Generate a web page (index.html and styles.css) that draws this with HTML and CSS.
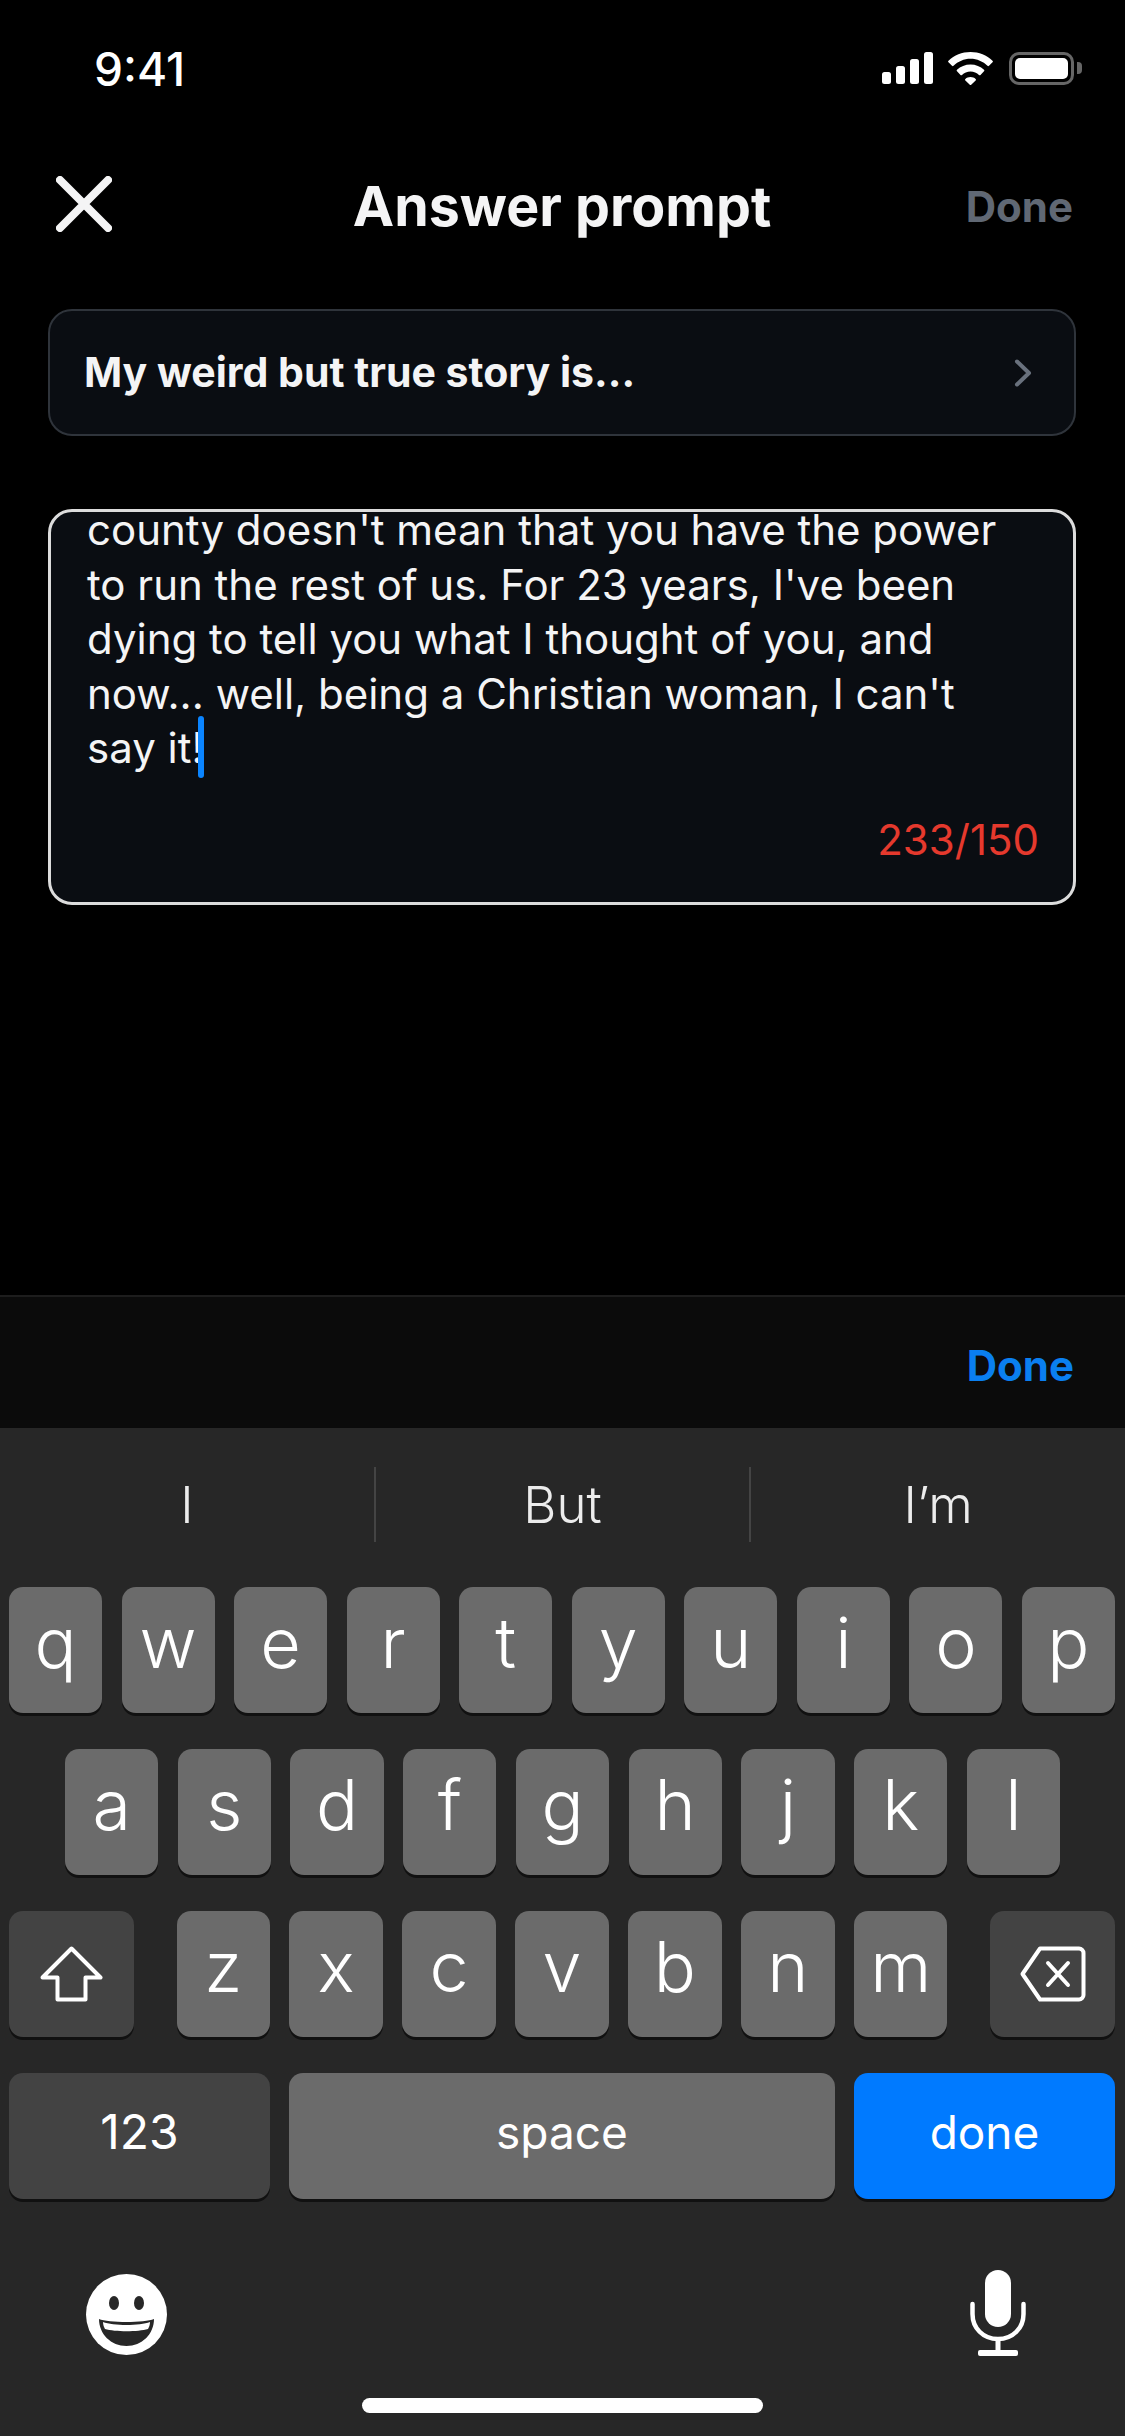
FILE: index.html
```html
<!DOCTYPE html>
<html lang="en">
<head>
<meta charset="utf-8">
<title>Answer prompt</title>
<link rel="stylesheet" href="styles.css">
</head>
<body>
<div class="screen">
  <main class="app">
    <div class="status">
      <span class="time">9:41</span>
      <div class="status-icons">
        <svg class="signal" width="51" height="32" viewBox="0 0 51 32"><rect x="0" y="20" width="9" height="12" rx="2.5"/><rect x="14" y="14" width="9" height="18" rx="2.5"/><rect x="28" y="7" width="9" height="25" rx="2.5"/><rect x="42" y="0" width="9" height="32" rx="2.5"/></svg>
        <svg class="wifi" width="45" height="33" viewBox="0 0 45 33"><path d="M22.5 0C31 0 38.800 3.300 44.500 8.700a1 1 0 0 1 0 1.500L41 13.800a1 1 0 0 1-1.500 0C35 9.500 29 6.800 22.500 6.800S10 9.500 5.500 13.800a1 1 0 0 1-1.500 0L.5 10.200a1 1 0 0 1 0-1.500C6.200 3.300 14 0 22.500 0Z"/><path d="M22.500 12.500c5.200 0 10 2 13.500 5.300a1 1 0 0 1 0 1.500l-3.500 3.600a1 1 0 0 1-1.500 0c-2.200-2-5.200-3.300-8.500-3.300S16.200 20.900 14 22.900a1 1 0 0 1-1.500 0L9 19.300a1 1 0 0 1 0-1.500c3.500-3.300 8.300-5.300 13.500-5.300Z"/><path d="M22.500 25c2 0 3.800.7 5.100 1.900a1 1 0 0 1 0 1.500l-4.400 4.300a1 1 0 0 1-1.400 0l-4.400-4.300a1 1 0 0 1 0-1.500C18.700 25.700 20.500 25 22.500 25Z"/></svg>
        <div class="battery"><div class="battery-body"><div class="battery-fill"></div></div><div class="battery-nub"></div></div>
      </div>
    </div>

    <header class="nav">
      <svg class="close" width="56" height="56" viewBox="0 0 56 56"><path d="M4 4 52 52M52 4 4 52" stroke="#f4f4f5" stroke-width="8" stroke-linecap="round" fill="none"/></svg>
      <h1 class="nav-title">Answer prompt</h1>
      <span class="nav-done">Done</span>
    </header>

    <div class="prompt-card">
      <span class="prompt-text">My weird but true story is...</span>
      <svg class="chevron" width="18" height="28" viewBox="0 0 18 28"><path d="M3 2.500 15 14 3 25.500" stroke="#69717d" stroke-width="4" stroke-linecap="round" stroke-linejoin="round" fill="none"/></svg>
    </div>

    <section class="answer">
      <p class="answer-text">county doesn't mean that you have the power<br>to run the rest of us. For 23 years, I've been<br>dying to tell you what I thought of you, and<br>now... well, being a Christian woman, I can't<br>say it!<span class="caret"></span></p>
      <div class="counter">233/150</div>
    </section>
  </main>

  <div class="toolbar"><span class="toolbar-done">Done</span></div>

  <div class="keyboard">
    <div class="suggestions">
      <span class="suggestion">I</span>
      <span class="suggestion">But</span>
      <span class="suggestion">I’m</span>
    </div>
    <div class="row row-1">
      <span class="key">q</span><span class="key">w</span><span class="key">e</span><span class="key">r</span><span class="key">t</span><span class="key">y</span><span class="key">u</span><span class="key">i</span><span class="key">o</span><span class="key">p</span>
    </div>
    <div class="row row-2">
      <span class="key">a</span><span class="key">s</span><span class="key">d</span><span class="key">f</span><span class="key">g</span><span class="key">h</span><span class="key">j</span><span class="key">k</span><span class="key">l</span>
    </div>
    <div class="row row-3">
      <span class="key key-fn key-side">
        <svg width="63" height="56" viewBox="0 0 63 56"><path d="M31.500 2.500 60.500 31.500H45.500V53.500H17.500V31.500H2.500Z" fill="none" stroke="#fff" stroke-width="4" stroke-linejoin="round"/></svg>
      </span>
      <div class="row-3-letters">
        <span class="key">z</span><span class="key">x</span><span class="key">c</span><span class="key">v</span><span class="key">b</span><span class="key">n</span><span class="key">m</span>
      </div>
      <span class="key key-fn key-side">
        <svg width="66" height="56" viewBox="0 0 66 56"><path d="M20 2.500H59a4.500 4.500 0 0 1 4.500 4.500V49a4.500 4.500 0 0 1-4.500 4.500H20L2.500 28Z" fill="none" stroke="#fff" stroke-width="4" stroke-linejoin="round"/><path d="M28 17 48 39M48 17 28 39" stroke="#fff" stroke-width="4" stroke-linecap="round" fill="none"/></svg>
      </span>
    </div>
    <div class="row row-4">
      <span class="key key-fn key-small key-num">123</span>
      <span class="key key-small key-space">space</span>
      <span class="key key-small key-go">done</span>
    </div>
    <div class="kb-bottom">
      <svg width="81" height="81" viewBox="0 0 81 81"><circle cx="40.500" cy="40.500" r="40.500" fill="#fff"/><ellipse cx="28" cy="29" rx="5" ry="7" fill="#272727"/><ellipse cx="53" cy="29" rx="5" ry="7" fill="#272727"/><path d="M13 45C22 49 59 49 68 45 68 60 56 72 40.500 72S13 60 13 45Z" fill="#272727"/><path d="M17 48C27 52 54 52 64 48 64 51 63 53 62 55 52 58 29 58 19 55 18 53 17 51 17 48Z" fill="#fff"/></svg>
      <svg width="56" height="86" viewBox="0 0 56 86"><rect x="15" y="0" width="26" height="57" rx="13" fill="#fff"/><path d="M2.500 34V44C2.500 58 13 69 28 69S53.500 58 53.500 44V34" stroke="#fff" stroke-width="4.500" stroke-linecap="round" fill="none"/><rect x="25.500" y="68" width="5" height="14" fill="#fff"/><rect x="8" y="80" width="40" height="6" rx="2" fill="#fff"/></svg>
    </div>
    <div class="home-wrap"><div class="home-bar"></div></div>
  </div>
</div>
</body>
</html>
```
FILE: styles.css
```css
* { box-sizing: border-box; }
html, body { margin: 0; padding: 0; background: #000; }
.screen {
  width: 1125px;
  height: 2436px;
  overflow: hidden;
  display: flex;
  flex-direction: column;
  background: #000;
  font-family: "Inter", "Liberation Sans", sans-serif;
}
.app { height: 1295px; padding: 0 49px 0 48px; }

.status {
  height: 136px;
  display: flex;
  justify-content: space-between;
  align-items: center;
  padding: 2px 0 0 46px;
}
.time {
  font-size: 46px;
  font-weight: 500;
  color: #fff;
}
.status-icons { display: flex; align-items: center; margin: -2px -6px 0 0; }
.signal { fill: #fff; margin-right: 15px; }
.wifi { fill: #fff; margin-right: 16px; }
.battery { display: flex; align-items: center; gap: 3px; }
.battery-body {
  width: 65px;
  height: 33px;
  border: 3px solid #666;
  border-radius: 10px;
  padding: 3px;
}
.battery-fill { height: 100%; background: #fff; border-radius: 5px; }
.battery-nub { width: 5px; height: 12px; background: #666; border-radius: 0 4px 4px 0; }

.nav {
  height: 136px;
  display: grid;
  grid-template-columns: 1fr auto 1fr;
  align-items: center;
  padding: 0 3px 0 8px;
}
.nav-title {
  margin: 0 5px 0 0;
  padding-top: 3px;
  font-size: 55.500px;
  font-weight: 700;
  color: #f4f4f5;
}
.nav-done {
  justify-self: end;
  padding-top: 4px;
  font-size: 42px;
  font-weight: 700;
  color: #606874;
}

.prompt-card {
  margin-top: 37px;
  height: 127px;
  background: #0a0d12;
  border: 2px solid #2f343b;
  border-radius: 24px;
  padding: 0 42px 0 34px;
  display: flex;
  align-items: center;
  justify-content: space-between;
}
.prompt-text { font-size: 41px; font-weight: 700; color: #f4f4f5; margin-top: -2px; }

.answer {
  margin-top: 73px;
  height: 396px;
  background: #0a0d12;
  border: 3px solid #dcdcdc;
  border-radius: 24px;
  padding: 0 34px 0 36px;
  display: flex;
  flex-direction: column;
  justify-content: space-between;
}
.answer-text {
  margin: -9px 0 0;
  font-size: 42px;
  line-height: 54.600px;
  color: #f4f4f5;
  white-space: nowrap;
}
.caret {
  display: inline-block;
  width: 6px;
  height: 62px;
  margin: -40px 0 -15px -6px;
  background: #0a84ff;
  border-radius: 3px;
}
.counter {
  text-align: right;
  font-size: 42px;
  line-height: 56px;
  color: #e5392d;
  margin-bottom: 34px;
}

.toolbar {
  height: 133px;
  background: #0b0b0b;
  border-top: 2px solid #1d1d1d;
  display: flex;
  align-items: center;
  justify-content: flex-end;
  padding: 5px 51px 0 0;
}
.toolbar-done { font-size: 42px; font-weight: 700; color: #0a7ff0; }

.keyboard {
  flex: 1;
  background: #272727;
  font-weight: 300;
  color: #fff;
  display: flex;
  flex-direction: column;
}
.suggestions { height: 159px; padding-top: 39px; display: flex; align-items: flex-start; }
.suggestion {
  flex: 1;
  height: 75px;
  display: flex;
  align-items: center;
  justify-content: center;
  font-size: 51px;
  color: #ececec;
  border-left: 2px solid #444;
}
.suggestion:first-child { border-left: 0; }

.row { display: flex; height: 126px; margin-bottom: 36px; gap: 19.500px; padding: 0 10px 0 9px; }
.row-2 { padding: 0 65px; }
.row-3 { justify-content: space-between; gap: 0; }
.row-3-letters { display: flex; gap: 19.500px; width: 771px; }
.row-4 { gap: 0; justify-content: space-between; }

.key {
  flex: 1;
  display: flex;
  align-items: center;
  justify-content: center;
  background: #6b6b6b;
  border-radius: 14px;
  box-shadow: 0 3px 0 #111;
  font-size: 70px;
  line-height: 1;
  color: #fff;
  padding-bottom: 14px;
}
.key-fn { background: #434343; }
.key-side { flex: 0 0 125px; padding-bottom: 0; }
.key-small { font-size: 46px; font-weight: 400; flex: 0 0 auto; padding-bottom: 8px; }
.key-num { width: 261px; font-size: 48px; }
.key-space { width: 546px; }
.key-go { width: 261px; background: #007aff; }

.kb-bottom {
  display: flex;
  justify-content: space-between;
  align-items: center;
  padding: 0 99px 0 86px;
  height: 86px;
  margin-top: 35px;
}
.kb-bottom svg:first-child { margin-top: 3px; }
.home-wrap { display: flex; justify-content: center; padding-top: 42px; }
.home-bar { width: 401px; height: 15px; background: #fff; border-radius: 8px; }
```
